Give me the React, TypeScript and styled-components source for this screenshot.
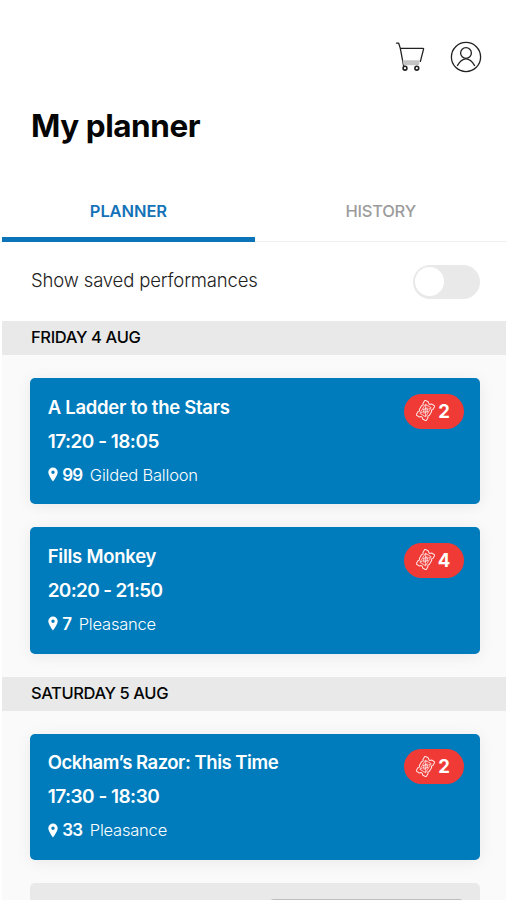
import React from "react";
import styled, { createGlobalStyle } from "styled-components";

const GlobalStyle = createGlobalStyle`
  * { box-sizing: border-box; }
  body {
    margin: 0;
    background: #fff;
    color: #050505;
    font-family: Inter, "Open Sans", sans-serif;
  }
  h1, h2, h3, p { margin: 0; }
`;

const Screen = styled.main`
  width: 506px;
  height: 900px;
  overflow: hidden;
  padding-left: 2.4px;
  display: flex;
  flex-direction: column;
`;

const Toolbar = styled.header`
  display: flex;
  justify-content: flex-end;
  align-items: center;
  gap: 25px;
  height: 40px;
  margin-top: 37px;
  padding-right: 24px;
  flex: none;
`;

const IconButton = styled.button`
  display: flex;
  border: 0;
  padding: 0;
  background: none;
  color: #222;
`;

const PageTitle = styled.h1`
  flex: none;
  height: 40px;
  margin: 29px 0 0 28.6px;
  font-size: 31.5px;
  line-height: 40px;
  font-weight: 700;
  letter-spacing: -0.45px;
`;

const Tabs = styled.nav`
  display: flex;
  flex: none;
  height: 60px;
  margin-top: 36px;
`;

const Tab = styled.button<{ $active?: boolean }>`
  flex: ${(p) => (p.$active ? "0 0 253px" : "1")};
  padding: ${(p) => (p.$active ? "3px 1px 0 0" : "0 0 1px")};
  border: 0;
  border-bottom: ${(p) => (p.$active ? "5px solid #0b74b8" : "1px solid #eee")};
  background: none;
  color: ${(p) => (p.$active ? "#1472b8" : "#9c9c9c")};
  font: ${(p) => (p.$active ? 600 : 500)} 16.5px/52px Inter, sans-serif;
  letter-spacing: ${(p) => (p.$active ? -0.1 : -0.25)}px;
`;

const FilterRow = styled.div`
  display: flex;
  flex: none;
  align-items: center;
  justify-content: space-between;
  height: 79px;
  padding: 0 26px 0 28.6px;
`;

const FilterLabel = styled.span`
  margin-bottom: 3px;
  font-size: 18.5px;
  line-height: 24px;
  font-weight: 300;
  letter-spacing: -0.15px;
  color: #222;
`;

const Switch = styled.span`
  display: flex;
  align-items: center;
  width: 67px;
  height: 34px;
  padding: 2px;
  border-radius: 17px;
  background: #e9e9e9;
`;

const Knob = styled.span`
  width: 29px;
  height: 29px;
  border-radius: 50%;
  background: #fff;
`;

const DayHeading = styled.h2<{ $tracking: number }>`
  flex: none;
  height: 34px;
  padding-left: 28.6px;
  background: #e9e9e9;
  font-size: 16.5px;
  line-height: 32px;
  font-weight: 500;
  letter-spacing: ${(p) => p.$tracking}px;
`;

const DayList = styled.section`
  display: flex;
  flex: none;
  flex-direction: column;
  gap: 23px;
  padding: 23px 26px 23px 28px;
  background: #fafafa;
`;

const Card = styled.article`
  display: flex;
  justify-content: space-between;
  align-items: flex-start;
  height: 126.4px;
  padding: 15.6px 16px 0 17.3px;
  border-radius: 5px;
  background: #007cbc;
  color: #fff;
  box-shadow: 0 2px 16px rgba(0, 0, 0, 0.07);
`;

const CardTitle = styled.h3<{ $tracking: number }>`
  font-size: 18.5px;
  line-height: 26px;
  font-weight: 600;
  letter-spacing: ${(p) => p.$tracking}px;
`;

const CardTime = styled.p<{ $tracking: number }>`
  margin-top: 9px;
  font-size: 19px;
  line-height: 26px;
  font-weight: 600;
  letter-spacing: ${(p) => p.$tracking}px;
`;

const Venue = styled.p`
  display: flex;
  align-items: center;
  height: 26px;
  margin-top: 7px;
  font-size: 16.5px;
  font-weight: 300;
  letter-spacing: -0.2px;
`;

const VenueNumber = styled.b`
  margin: 0 7.5px 0 4.5px;
  font-size: 17px;
  font-weight: 600;
  letter-spacing: -0.8px;
`;

const Badge = styled.span`
  display: flex;
  align-items: center;
  justify-content: center;
  gap: 3px;
  width: 60px;
  height: 35px;
  padding: 0 2px 1px 0;
  border-radius: 18px;
  background: #f03a35;
  font-size: 18.5px;
  font-weight: 700;
`;

const EmptyCard = styled.article`
  display: flex;
  justify-content: flex-end;
  height: 126px;
  padding: 15.5px 15px 0 0;
  border-radius: 5px;
  background: #e9e9e9;
`;

const EmptyAction = styled.span`
  width: 197px;
  height: 35px;
  border-radius: 6px;
  background: #bdbdbd;
`;

const CartIcon = () => (
  <svg width="30" height="30" viewBox="0 0 30 30" fill="none" stroke="currentColor" strokeWidth="1.3" strokeLinecap="round" strokeLinejoin="round">
    <path d="M1.5 1.2h2.2l1.6 5.2 3.4 18M5.5 6.4H28q.8 0 .5 1l-3.1 12" />
    <path d="M7.6 18.3h17.5l-1.3 5H8.6z" fill="#c4c4c4" stroke="none" />
    <circle cx="10" cy="26.2" r="1.9" strokeWidth="1.6" />
    <circle cx="21.8" cy="26.2" r="1.9" strokeWidth="1.6" />
  </svg>
);

const AccountIcon = () => (
  <svg width="32" height="32" viewBox="0 0 32 32" fill="none" stroke="currentColor" strokeWidth="1.3">
    <circle cx="16" cy="16" r="14.6" />
    <circle cx="16" cy="12" r="5.4" />
    <path d="M7.2 24.8c2.2-3.8 5.4-6.9 8.8-6.9s6.6 3.1 8.8 6.9" />
  </svg>
);

const PinIcon = () => (
  <svg width="10" height="15" viewBox="0 0 10 15" fill="#fff">
    <path fillRule="evenodd" d="M5 .5A4.7 4.7 0 0 0 .3 5.2C.3 8.4 5 14.5 5 14.5S9.7 8.4 9.7 5.2A4.7 4.7 0 0 0 5 .5Zm0 3a1.7 1.7 0 1 1 0 3.4 1.7 1.7 0 0 1 0-3.4Z" />
  </svg>
);

const TicketIcon = () => (
  <svg width="19" height="21" viewBox="0 0 19 21" fill="none" stroke="#fff" strokeOpacity=".85" strokeWidth="1.1" strokeLinejoin="round">
    <g transform="rotate(31 9.5 10.5)">
      <path d="M3.7 1.8h3.9q1.9 2.6 3.8 0h3.9v4q-1.6 1.2 0 2.4v4.6q-1.6 1.2 0 2.4v4h-3.9q-1.9-2.6-3.8 0H3.7v-4q1.6-1.2 0-2.4V8.2q1.6-1.2 0-2.4z" />
      <path d="M6.2 5.2h6.6v10.6H6.2zM6.2 5.2l6.6 10.6M12.8 5.2 6.2 15.8M6.2 10.5h6.6" strokeOpacity=".65" strokeWidth=".9" />
      <path d="m9.5 7.3 2.2 3.2-2.2 3.2-2.2-3.2z" strokeOpacity=".65" strokeWidth=".9" />
    </g>
  </svg>
);

type Performance = {
  title: string;
  titleTracking: number;
  time: string;
  timeTracking: number;
  venueNumber: number;
  venue: string;
  tickets: number;
};

const friday: Performance[] = [
  { title: "A Ladder to the Stars", titleTracking: -0.28, time: "17:20 - 18:05", timeTracking: -0.52, venueNumber: 99, venue: "Gilded Balloon", tickets: 2 },
  { title: "Fills Monkey", titleTracking: -0.25, time: "20:20 - 21:50", timeTracking: -0.68, venueNumber: 7, venue: "Pleasance", tickets: 4 },
];

const saturday: Performance[] = [
  { title: "Ockham’s Razor: This Time", titleTracking: -0.48, time: "17:30 - 18:30", timeTracking: -0.52, venueNumber: 33, venue: "Pleasance", tickets: 2 },
];

const PerformanceCard = ({ item }: { item: Performance }) => (
  <Card>
    <div>
      <CardTitle $tracking={item.titleTracking}>{item.title}</CardTitle>
      <CardTime $tracking={item.timeTracking}>{item.time}</CardTime>
      <Venue>
        <PinIcon />
        <VenueNumber>{item.venueNumber}</VenueNumber>
        {item.venue}
      </Venue>
    </div>
    <Badge>
      <TicketIcon />
      {item.tickets}
    </Badge>
  </Card>
);

export default function App() {
  return (
    <>
      <GlobalStyle />
      <Screen>
        <Toolbar>
          <IconButton aria-label="Basket"><CartIcon /></IconButton>
          <IconButton aria-label="Account"><AccountIcon /></IconButton>
        </Toolbar>
        <PageTitle>My planner</PageTitle>
        <Tabs>
          <Tab $active>PLANNER</Tab>
          <Tab>HISTORY</Tab>
        </Tabs>
        <FilterRow>
          <FilterLabel>Show saved performances</FilterLabel>
          <Switch role="switch" aria-checked="false"><Knob /></Switch>
        </FilterRow>
        <DayHeading $tracking={-0.35}>FRIDAY 4 AUG</DayHeading>
        <DayList>
          {friday.map((p) => <PerformanceCard key={p.title} item={p} />)}
        </DayList>
        <DayHeading $tracking={-0.4}>SATURDAY 5 AUG</DayHeading>
        <DayList>
          {saturday.map((p) => <PerformanceCard key={p.title} item={p} />)}
          <EmptyCard><EmptyAction /></EmptyCard>
        </DayList>
      </Screen>
    </>
  );
}
